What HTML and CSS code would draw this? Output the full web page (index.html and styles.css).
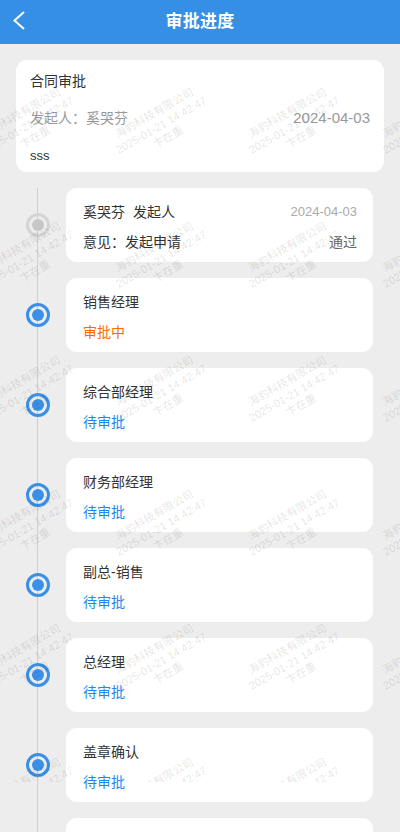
FILE: index.html
```html
<!DOCTYPE html>
<html lang="zh-CN">
<head>
<meta charset="utf-8">
<meta name="viewport" content="width=device-width, initial-scale=1">
<title>审批进度</title>
<link rel="stylesheet" href="styles.css">
</head>
<body>
<div class="page">
  <header class="nav">
    <span class="nav-back">
      <svg width="44" height="44" viewBox="0 0 44 44" aria-hidden="true"><path d="M24 12 L14.5 20.5 L24 29" fill="none" stroke="#fff" stroke-width="2"/></svg>
    </span>
    <h1 class="nav-title">审批进度</h1>
    <span class="nav-side"></span>
  </header>

  <main class="content">
    <section class="summary">
      <div class="summary-title">合同审批</div>
      <div class="summary-meta">
        <span class="summary-author">发起人：奚哭芬</span>
        <span class="summary-date">2024-04-03</span>
      </div>
      <div class="summary-note">sss</div>
    </section>

    <ol class="timeline">
      <li class="step step-done">
        <div class="step-rail"><span class="dot"></span></div>
        <div class="step-card">
          <div class="step-row">
            <span class="step-title">奚哭芬<span class="step-role">发起人</span></span>
            <span class="step-date">2024-04-03</span>
          </div>
          <div class="step-row">
            <span class="step-opinion">意见：发起申请</span>
            <span class="step-result">通过</span>
          </div>
        </div>
      </li>
      <li class="step">
        <div class="step-rail"><span class="dot"></span></div>
        <div class="step-card">
          <div class="step-row"><span class="step-title">销售经理</span></div>
          <div class="step-row"><span class="status status-active">审批中</span></div>
        </div>
      </li>
      <li class="step">
        <div class="step-rail"><span class="dot"></span></div>
        <div class="step-card">
          <div class="step-row"><span class="step-title">综合部经理</span></div>
          <div class="step-row"><span class="status status-wait">待审批</span></div>
        </div>
      </li>
      <li class="step">
        <div class="step-rail"><span class="dot"></span></div>
        <div class="step-card">
          <div class="step-row"><span class="step-title">财务部经理</span></div>
          <div class="step-row"><span class="status status-wait">待审批</span></div>
        </div>
      </li>
      <li class="step">
        <div class="step-rail"><span class="dot"></span></div>
        <div class="step-card">
          <div class="step-row"><span class="step-title">副总-销售</span></div>
          <div class="step-row"><span class="status status-wait">待审批</span></div>
        </div>
      </li>
      <li class="step">
        <div class="step-rail"><span class="dot"></span></div>
        <div class="step-card">
          <div class="step-row"><span class="step-title">总经理</span></div>
          <div class="step-row"><span class="status status-wait">待审批</span></div>
        </div>
      </li>
      <li class="step">
        <div class="step-rail"><span class="dot"></span></div>
        <div class="step-card">
          <div class="step-row"><span class="step-title">盖章确认</span></div>
          <div class="step-row"><span class="status status-wait">待审批</span></div>
        </div>
      </li>
      <li class="step">
        <div class="step-rail"><span class="dot"></span></div>
        <div class="step-card"></div>
      </li>
    </ol>
  </main>

  <div class="watermark" aria-hidden="true">
    <div class="wm-grid">
      <div class="wm-tile"><div class="wm-text">海豹科技有限公司<br>2025-01-21 14:42:47<br>卞在重</div></div>
      <div class="wm-tile"><div class="wm-text">海豹科技有限公司<br>2025-01-21 14:42:47<br>卞在重</div></div>
      <div class="wm-tile"><div class="wm-text">海豹科技有限公司<br>2025-01-21 14:42:47<br>卞在重</div></div>
      <div class="wm-tile"><div class="wm-text">海豹科技有限公司<br>2025-01-21 14:42:47<br>卞在重</div></div>
      <div class="wm-tile"><div class="wm-text">海豹科技有限公司<br>2025-01-21 14:42:47<br>卞在重</div></div>
      <div class="wm-tile"><div class="wm-text">海豹科技有限公司<br>2025-01-21 14:42:47<br>卞在重</div></div>
      <div class="wm-tile"><div class="wm-text">海豹科技有限公司<br>2025-01-21 14:42:47<br>卞在重</div></div>
      <div class="wm-tile"><div class="wm-text">海豹科技有限公司<br>2025-01-21 14:42:47<br>卞在重</div></div>
      <div class="wm-tile"><div class="wm-text">海豹科技有限公司<br>2025-01-21 14:42:47<br>卞在重</div></div>
      <div class="wm-tile"><div class="wm-text">海豹科技有限公司<br>2025-01-21 14:42:47<br>卞在重</div></div>
      <div class="wm-tile"><div class="wm-text">海豹科技有限公司<br>2025-01-21 14:42:47<br>卞在重</div></div>
      <div class="wm-tile"><div class="wm-text">海豹科技有限公司<br>2025-01-21 14:42:47<br>卞在重</div></div>
      <div class="wm-tile"><div class="wm-text">海豹科技有限公司<br>2025-01-21 14:42:47<br>卞在重</div></div>
      <div class="wm-tile"><div class="wm-text">海豹科技有限公司<br>2025-01-21 14:42:47<br>卞在重</div></div>
      <div class="wm-tile"><div class="wm-text">海豹科技有限公司<br>2025-01-21 14:42:47<br>卞在重</div></div>
      <div class="wm-tile"><div class="wm-text">海豹科技有限公司<br>2025-01-21 14:42:47<br>卞在重</div></div>
      <div class="wm-tile"><div class="wm-text">海豹科技有限公司<br>2025-01-21 14:42:47<br>卞在重</div></div>
      <div class="wm-tile"><div class="wm-text">海豹科技有限公司<br>2025-01-21 14:42:47<br>卞在重</div></div>
      <div class="wm-tile"><div class="wm-text">海豹科技有限公司<br>2025-01-21 14:42:47<br>卞在重</div></div>
      <div class="wm-tile"><div class="wm-text">海豹科技有限公司<br>2025-01-21 14:42:47<br>卞在重</div></div>
      <div class="wm-tile"><div class="wm-text">海豹科技有限公司<br>2025-01-21 14:42:47<br>卞在重</div></div>
      <div class="wm-tile"><div class="wm-text">海豹科技有限公司<br>2025-01-21 14:42:47<br>卞在重</div></div>
      <div class="wm-tile"><div class="wm-text">海豹科技有限公司<br>2025-01-21 14:42:47<br>卞在重</div></div>
      <div class="wm-tile"><div class="wm-text">海豹科技有限公司<br>2025-01-21 14:42:47<br>卞在重</div></div>
    </div>
  </div>
</div>
</body>
</html>
```

FILE: styles.css
```css
* { box-sizing: border-box; }

html, body {
  margin: 0;
  padding: 0;
  background: #ededed;
  font-family: "Liberation Sans", "Noto Sans CJK SC", sans-serif;
  color: #333;
}

.page {
  position: relative;
  width: 400px;
  height: 832px;
  overflow: hidden;
}

/* header */
.nav {
  display: grid;
  grid-template-columns: 44px 1fr 44px;
  align-items: center;
  height: 44px;
  background: #358fe4;
  color: #fff;
}
.nav-back { display: flex; width: 44px; height: 44px; }
.nav-back svg { display: block; }
.nav-title {
  margin: 0;
  text-align: center;
  font-size: 17px;
  font-weight: bold;
  line-height: 44px;
  letter-spacing: 0.3px;
}

.content {
  padding: 16px 16px 0;
}

/* summary card */
.summary {
  background: #fff;
  border-radius: 11px;
  padding: 10px 14px 6px;
}
.summary-title {
  font-size: 14px;
  line-height: 22px;
  color: #333;
}
.summary-meta {
  margin-top: 14px;
  display: flex;
  justify-content: space-between;
  align-items: center;
  line-height: 24px;
}
.summary-author {
  font-size: 14px;
  color: #999;
}
.summary-date {
  font-size: 15px;
  color: #999;
}
.summary-note {
  margin-top: 16px;
  font-size: 13px;
  line-height: 20px;
  color: #333;
}

/* timeline */
.timeline {
  list-style: none;
  margin: 16px 0 0;
  padding: 0;
  display: flex;
  flex-direction: column;
  gap: 16px;
  background: linear-gradient(#cfcfcf, #cfcfcf) no-repeat 21px 0 / 1px 100%;
}
.step {
  display: flex;
  align-items: center;
}
.step-rail {
  width: 50px;
  flex: none;
  padding-left: 10px;
  display: flex;
}
.dot {
  width: 24px;
  height: 24px;
  border-radius: 50%;
  border: 3px solid #3a8fe6;
  padding: 3px;
  background: #fff content-box;
  display: flex;
}
.dot::after {
  content: "";
  flex: 1;
  border-radius: 50%;
  background: #3a8fe6;
}
.step-done .dot { border-color: #d4d4d4; }
.step-done .dot::after { background: #c6c6c6; }

.step-card {
  flex: 1;
  margin-right: 11px;
  height: 74px;
  background: #fff;
  border-radius: 11px;
  padding: 14px 16px 10px 17px;
  display: flex;
  flex-direction: column;
  gap: 10px;
}
.step-row {
  display: flex;
  justify-content: space-between;
  align-items: center;
  line-height: 20px;
  font-size: 14px;
}
.step-title { color: #333; }
.step-role { margin-left: 8px; }
.step-date { font-size: 13px; color: #aaa; }
.step-opinion { color: #333; }
.step-result { color: #666; }
.status-active { color: #ff6a00; }
.status-wait { color: #1e88f0; }

/* watermark overlay */
.watermark {
  position: absolute;
  left: 0;
  top: 0;
  width: 400px;
  height: 782px;
  overflow: hidden;
  pointer-events: none;
}
.wm-grid {
  margin: 58px 0 0 -39px;
  display: grid;
  grid-template-columns: repeat(4, 133.33px);
  grid-auto-rows: 134px;
}
.wm-tile {
  display: flex;
  align-items: center;
  justify-content: center;
}
.wm-text {
  transform: rotate(-30deg);
  text-align: center;
  white-space: nowrap;
  font-size: 11px;
  line-height: 14px;
  color: rgba(0, 0, 0, 0.12);
}
```
